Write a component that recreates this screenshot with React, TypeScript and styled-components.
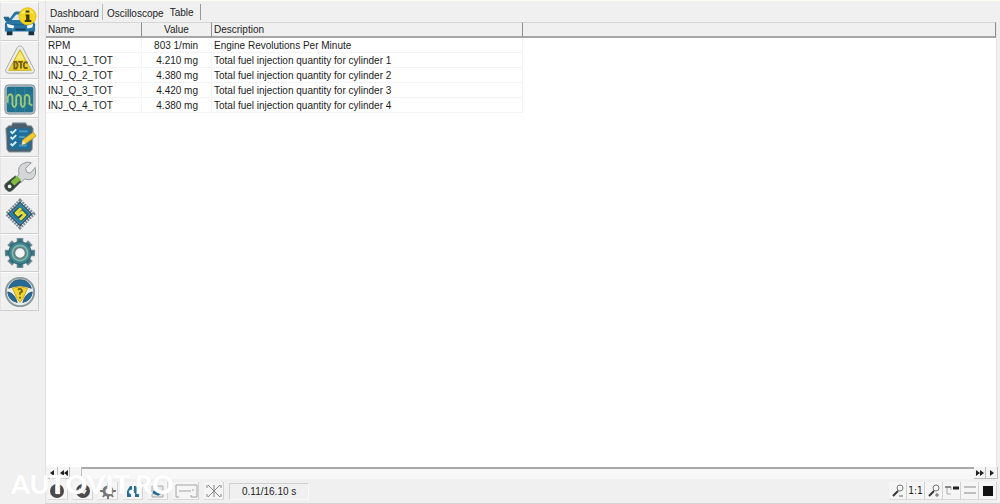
import React, { useState } from "react";
import styled, { createGlobalStyle } from "styled-components";

const GlobalStyle = createGlobalStyle`
  * { box-sizing: border-box; }
  body {
    margin: 0;
    background: #f0f0f0;
    color: #1c1c1c;
    font-family: "Liberation Sans", Arial, sans-serif;
    font-size: 10px;
    line-height: 14px;
  }
  button { font: inherit; color: inherit; }
`;

const Window = styled.div`
  position: relative;
  display: flex;
  min-height: 100vh;
  border-top: 1px solid #fbfbf0;
  overflow: hidden;
`;

const SideBar = styled.nav`
  flex: none;
  width: 46px;
  padding-top: 1px;
  border-right: 1px solid #e2e2e2;
`;

const SideButtons = styled.div`
  display: flex;
  flex-direction: column;
  height: 309px;
`;

const SideButton = styled.button<{ $active?: boolean }>`
  display: flex;
  flex: 1;
  align-items: center;
  justify-content: center;
  width: 39px;
  min-height: 0;
  padding: 0;
  border: 1px solid;
  border-color: #fdfdfd #cfcfcf #cfcfcf #e4e4e4;
  background: ${(p) => (p.$active ? "#f9f9f9" : "#f0f0f0")};
`;

const Main = styled.main`
  display: flex;
  flex: 1;
  flex-direction: column;
  min-width: 0;
`;

const TabBar = styled.div`
  display: flex;
  align-items: stretch;
  height: 21px;
  padding-top: 3px;
`;

const Tab = styled.button<{ $active?: boolean }>`
  display: flex;
  align-items: flex-start;
  padding: ${(p) => (p.$active ? "2px 6px 0 2px" : "3px 3px 0 4px")};
  border: 0;
  border-right: 1px solid ${(p) => (p.$active ? "#9a9a9a" : "#bcbcbc")};
  background: none;
  height: 16px;
  white-space: nowrap;

  &:nth-child(2) { border-right-color: transparent; }
`;

const Panel = styled.section`
  flex: 1;
  margin-right: 3px;
  background: #fff;
  border-right: 1px solid #e6e6e6;
`;

const DataTable = styled.table`
  width: 100%;
  table-layout: fixed;
  border-collapse: separate;
  border-spacing: 0;
  white-space: nowrap;
`;

const Col = styled.col<{ $width?: number }>`
  width: ${(p) => (p.$width ? `${p.$width}px` : "auto")};
`;

const HeadCell = styled.th<{ $center?: boolean }>`
  height: 16px;
  padding: 0 2px;
  background: #f0f0f0;
  border-top: 1px solid #d6d6d6;
  border-right: 1px solid #8e8e8e;
  border-bottom: 2px solid #a6a6a6;
  font-weight: 400;
  line-height: 13px;
  text-align: ${(p) => (p.$center ? "center" : "left")};
`;

const Cell = styled.td<{ $right?: boolean }>`
  height: 15px;
  padding: 1px ${(p) => (p.$right ? "13px" : "2px")} 0 2px;
  border-right: 1px solid #f4f4f4;
  border-bottom: 1px solid #f4f4f4;
  line-height: 13px;
  text-align: ${(p) => (p.$right ? "right" : "left")};

  &:last-child { border-color: transparent; }
`;

const ScrollRow = styled.div`
  display: flex;
  justify-content: space-between;
  height: 12px;
  margin-right: 2px;
  background: linear-gradient(#a8a8a8 0 2px, #f8f8f8 2px);
`;

const ScrollGroup = styled.div`
  display: flex;
  background: #f4f4f4;
`;

const ScrollButton = styled.button`
  display: flex;
  align-items: center;
  justify-content: center;
  width: 12px;
  height: 12px;
  padding: 0;
  border: 0;
  border-right: 1px solid #bdbdbd;
  border-bottom: 1px solid #bdbdbd;
  background: none;
`;

const StatusBar = styled.footer`
  display: flex;
  justify-content: space-between;
  height: 25px;
  padding: 2px 3px 2px 2px;
  border-bottom: 1px solid #d4d4d4;
`;

const ToolGroup = styled.div<{ $wide?: boolean }>`
  display: flex;
  align-items: center;
  gap: ${(p) => (p.$wide ? "5px" : "0")};
`;

const ToolButton = styled.button<{ $wide?: boolean }>`
  display: flex;
  align-items: center;
  justify-content: center;
  width: ${(p) => (p.$wide ? "26px" : "20px")};
  height: 18px;
  padding: 0;
  border: 0;
  border-right: 1px solid #d2d2d2;
  border-bottom: 1px solid #dadada;
  background: #f5f5f5;
`;

const ViewButton = styled(ToolButton)`
  width: 18px;
  font-family: "DejaVu Sans Condensed", "DejaVu Sans", sans-serif;
`;

const TimeField = styled.output`
  width: 80px;
  height: 17px;
  padding-left: 12px;
  border: 1px solid;
  border-color: #d0d0d0 #fafafa #fafafa #d0d0d0;
  line-height: 15px;
  white-space: nowrap;
`;

const Watermark = styled.div`
  position: absolute;
  left: 11px;
  bottom: 5px;
  color: #fff;
  font: 900 27px/30px Lato, sans-serif;
  text-shadow: 0 0 1px #e2e2e2;
  pointer-events: none;
`;

const Icon = ({ children }: { children: React.ReactNode }) => (
  <svg width="34" height="34" viewBox="0 0 36 36" aria-hidden="true">
    {children}
  </svg>
);

const CarIcon = () => (
  <Icon>
    <path d="M4 27h6v6H4zM27 27h6v6h-6z" fill="#18303f" />
    <path d="M2 22q0-3 4-5l5-7q1-2 3-2h11q2 0 3 2l3 7q3 2 3 5v7H2z" fill="#2876a4" />
    <path d="M9 17l5-6h10l3 6z" fill="#d8e9ef" />
    <path d="M1 14h5l1 3-4 1zM3 22h31" stroke="#1c5d88" fill="#25638a" />
    <path d="M4 21l8 2-1 3-6-1zM32 21l-7 2 1 3 5-1z" fill="#f2f8f8" />
    <path d="M13 27h11" stroke="#123d5d" strokeWidth="2" />
    <circle cx="26" cy="13" r="9" fill="#f4d51e" stroke="#e3bf1a" />
    <path d="M20 10q6-6 12 0" stroke="#fbe96c" strokeWidth="2" fill="none" />
    <path d="M24 8h4M24 12h3v5M23 18h7" stroke="#3b3510" strokeWidth="2" fill="none" />
    <path d="M26 12v6" stroke="#3b3510" strokeWidth="3" />
  </Icon>
);

const WarningIcon = () => (
  <Icon>
    <path d="M18 3q2 0 3 2l12 23q1 4-3 4H6q-4 0-3-4L15 5q1-2 3-2z" fill="#eceee9" stroke="#a5aaa7" />
    <path d="M18 7l12 22H6z" fill="#efd12b" stroke="#cdb02a" />
    <path d="M18 9l5 9H13z" fill="#f8ea79" />
    <path d="M12 20v7h2q3-3 0-7zM16 20h5M19 20v7M26 21q-4-2-4 2.500t4 2.500" fill="none" stroke="#75621a" strokeWidth="2" />
  </Icon>
);

const WaveIcon = () => (
  <Icon>
    <rect x="2" y="3" width="32" height="31" rx="4" fill="#b3bfc5" stroke="#85939a" />
    <rect x="4" y="5" width="28" height="27" rx="2" fill="#21718f" />
    <path d="M4 14h28M4 23h28M13 5v27M23 5v27" stroke="#3685a0" />
    <path d="M5 22v-6q3-6 5 0v8q2 5 4 0v-8q2-5 5 0v8q2 5 4 0v-8q2-5 5 0v7l3 2" fill="none" stroke="#9cca78" strokeWidth="2" />
  </Icon>
);

const ChecklistIcon = () => (
  <Icon>
    <path d="M10 3h14l2 3h4l2 3-1 22-2 3H6l-2-3L3 9l3-3h3z" fill="#4a6070" stroke="#9aa6ad" />
    <path d="M6 9h23v22H7z" fill="#1f6f9c" />
    <path d="M8 12l2 2 4-4M8 18l2 2 4-4M8 25l2 2 4-4" stroke="#d8eef6" strokeWidth="2" fill="none" />
    <path d="M17 12h9M17 18h6M17 27h8" stroke="#4c9cc4" strokeWidth="2" />
    <path d="M20 26l1-5 11-8 3 4-11 8z" fill="#efcb35" stroke="#c39a28" />
    <path d="M20 26l1-4 3 3z" fill="#f6ecd0" />
  </Icon>
);

const WrenchIcon = () => (
  <Icon>
    <path d="M17 16q-2-8 4-11 4-3 9-1l-6 6 1 4 4 1 5-6q2 8-3 12-4 2-8 0l-4 4-5-5z" fill="#d4d7d8" stroke="#8f9597" />
    <path d="M13 18l6 6-9 9q-4 3-7-1-3-4 1-7z" fill="#35433d" stroke="#57615b" />
    <path d="M15 18l4 4-7 6-4-4z" fill="#80bd3e" />
    <circle cx="7" cy="29" r="2" fill="#edf0ee" />
  </Icon>
);

const ChipIcon = () => (
  <Icon>
    <path d="M18 4l14 14-14 14L4 18z" fill="none" stroke="#7b8a97" strokeWidth="4" strokeDasharray="2 1" />
    <path d="M18 5l13 13-13 13L5 18z" fill="#24435a" />
    <path d="M18 7l11 11-11 11L7 18z" fill="#247ba0" stroke="#5f9db8" />
    <path d="M19 12l-5 5 2 2 4-3 3 3-5 5" fill="none" stroke="#244c45" strokeWidth="5" />
    <path d="M19 12l-5 5 2 2 4-3 3 3-5 5" fill="none" stroke="#e3dd45" strokeWidth="3" />
  </Icon>
);

const GearIcon = () => (
  <Icon>
    <g stroke="#7c8f97" strokeWidth="7">
      <path d="M18 2v32M2 18h32M7 7l22 22M29 7L7 29" />
    </g>
    <g stroke="#377683" strokeWidth="5">
      <path d="M18 3v30M3 18h30M8 8l20 20M28 8L8 28" />
    </g>
    <circle cx="18" cy="18" r="12" fill="#3c8490" stroke="#315f70" />
    <circle cx="18" cy="18" r="8" fill="none" stroke="#83b7a7" strokeWidth="2" />
    <circle cx="18" cy="18" r="6" fill="#f5f5f5" stroke="#68828a" strokeWidth="2" />
  </Icon>
);

const WheelIcon = () => (
  <Icon>
    <circle cx="18" cy="18" r="15" fill="#e6edef" stroke="#8b999f" strokeWidth="2" />
    <path d="M6 14Q9 5 18 5t12 9q-12-5-24 0zM5 18q7 1 10 11-9-2-10-11zM31 18q-7 1-10 11 9-2 10-11z" fill="#246b96" stroke="#24536f" />
    <path d="M10 14q8-3 16 0l-5 11-3 4-3-4z" fill="#f1d629" stroke="#c9aa22" />
    <path d="M16 16q1-2 3-1 3 2-1 4v2M18 23v2" stroke="#756618" strokeWidth="2" fill="none" />
  </Icon>
);

const SmallIcon = ({ children }: { children: React.ReactNode }) => (
  <svg width="16" height="16" viewBox="0 0 16 16" fill="none" aria-hidden="true">
    {children}
  </svg>
);

const Magnifier = ({ plus }: { plus?: boolean }) => (
  <SmallIcon>
    <circle cx="10" cy="5" r="3" stroke="#777" />
    <path d="M8 8l-5 5" stroke="#333" strokeWidth="2" />
    <path d={plus ? "M9 12h4M11 10v4" : "M9 13h4"} stroke="#666" />
  </SmallIcon>
);

const sections = [
  { label: "Vehicle information", icon: <CarIcon /> },
  { label: "Trouble codes", icon: <WarningIcon /> },
  { label: "Measurements", icon: <WaveIcon /> },
  { label: "Checklist", icon: <ChecklistIcon /> },
  { label: "Service", icon: <WrenchIcon /> },
  { label: "Control unit", icon: <ChipIcon /> },
  { label: "Settings", icon: <GearIcon /> },
  { label: "Driving help", icon: <WheelIcon /> },
];

const rows = [
  ["RPM", "803 1/min", "Engine Revolutions Per Minute"],
  ["INJ_Q_1_TOT", "4.210 mg", "Total fuel injection quantity for cylinder 1"],
  ["INJ_Q_2_TOT", "4.380 mg", "Total fuel injection quantity for cylinder 2"],
  ["INJ_Q_3_TOT", "4.420 mg", "Total fuel injection quantity for cylinder 3"],
  ["INJ_Q_4_TOT", "4.380 mg", "Total fuel injection quantity for cylinder 4"],
];

export default function App() {
  const [tab, setTab] = useState("Table");

  return (
    <>
      <GlobalStyle />
      <Window>
        <SideBar aria-label="Sections">
          <SideButtons>
            {sections.map((s, i) => (
              <SideButton key={s.label} aria-label={s.label} $active={i === 2}>
                {s.icon}
              </SideButton>
            ))}
          </SideButtons>
        </SideBar>
        <Main>
          <TabBar role="tablist">
            {["Dashboard", "Oscilloscope", "Table"].map((name) => (
              <Tab key={name} role="tab" aria-selected={tab === name} $active={tab === name} onClick={() => setTab(name)}>
                {name}
              </Tab>
            ))}
          </TabBar>
          <Panel>
            <DataTable>
              <colgroup>
                <Col $width={96} />
                <Col $width={70} />
                <Col $width={311} />
                <Col />
              </colgroup>
              <thead>
                <tr>
                  <HeadCell>Name</HeadCell>
                  <HeadCell $center>Value</HeadCell>
                  <HeadCell>Description</HeadCell>
                  <HeadCell />
                </tr>
              </thead>
              <tbody>
                {rows.map(([name, value, description]) => (
                  <tr key={name}>
                    <Cell>{name}</Cell>
                    <Cell $right>{value}</Cell>
                    <Cell>{description}</Cell>
                    <Cell />
                  </tr>
                ))}
              </tbody>
            </DataTable>
          </Panel>
          <ScrollRow>
            <ScrollGroup>
              <ScrollButton aria-label="Step back">
                <svg width="8" height="8"><path d="M6 1v6L2 4z" fill="#222" /></svg>
              </ScrollButton>
              <ScrollButton aria-label="Fast back">
                <svg width="10" height="8"><path d="M5 1v6L1 4zM9 1v6L5 4z" fill="#222" /></svg>
              </ScrollButton>
              <ScrollButton aria-label="Position" />
            </ScrollGroup>
            <ScrollGroup>
              <ScrollButton aria-label="Fast forward">
                <svg width="10" height="8"><path d="M1 1v6l4-3zM5 1v6l4-3z" fill="#222" /></svg>
              </ScrollButton>
              <ScrollButton aria-label="Step forward">
                <svg width="8" height="8"><path d="M2 1v6l4-3z" fill="#222" /></svg>
              </ScrollButton>
            </ScrollGroup>
          </ScrollRow>
          <StatusBar>
            <ToolGroup $wide>
              <ToolButton aria-label="Record">
                <SmallIcon><circle cx="7" cy="8" r="7" fill="#4a4a4a" /><path d="M7 3v7" stroke="#eee" strokeWidth="3" /></SmallIcon>
              </ToolButton>
              <ToolButton aria-label="Restart">
                <SmallIcon><circle cx="8" cy="8" r="7" fill="#4a4a4a" /><path d="M4 6l5 4 2-3" stroke="#eee" strokeWidth="2" /></SmallIcon>
              </ToolButton>
              <ToolButton aria-label="Options">
                <SmallIcon><circle cx="8" cy="8" r="4" stroke="#777" strokeWidth="3" /><path d="M8 0v3M8 13v3M0 8h3M13 8h3M3 14l2-3M13 14l-2-3" stroke="#777" strokeWidth="2" /></SmallIcon>
              </ToolButton>
              <ToolButton aria-label="Find">
                <SmallIcon><path d="M2 14V8l3-5h2v4h2V3h2l3 5v6h-4v-4H6v4z" fill="#286d93" /></SmallIcon>
              </ToolButton>
              <ToolButton aria-label="Save">
                <SmallIcon><path d="M2 3h11v11H2z" fill="#e6e6e6" stroke="#aaa" /><path d="M3 9l5 2 5-3" stroke="#286d93" strokeWidth="3" /></SmallIcon>
              </ToolButton>
              <ToolButton $wide aria-label="Ruler">
                <svg width="24" height="16" fill="none" stroke="#a3a3a3"><path d="M2 14V2h21v12h-6M5 8h12M18 7h2" /><path d="M2 14h3M17 12v2" /></svg>
              </ToolButton>
              <ToolButton aria-label="Clear">
                <SmallIcon><path d="M2 2l12 12M14 2L2 14M8 2v12M1 2v3M15 2v3M1 11v3M15 11v3" stroke="#858585" /></SmallIcon>
              </ToolButton>
              <TimeField>0.11/16.10 s</TimeField>
            </ToolGroup>
            <ToolGroup>
              <ViewButton aria-label="Zoom out"><Magnifier /></ViewButton>
              <ViewButton>1:1</ViewButton>
              <ViewButton aria-label="Zoom in"><Magnifier plus /></ViewButton>
              <ViewButton aria-label="Legend">
                <SmallIcon><path d="M3 4v7h4M7 4v3" stroke="#aaa" /><path d="M1 4h6" stroke="#888" strokeWidth="2" /><path d="M9 5h6" stroke="#222" strokeWidth="3" /></SmallIcon>
              </ViewButton>
              <ViewButton aria-label="Lines">
                <SmallIcon><path d="M2 4h12M2 10h12" stroke="#888" /></SmallIcon>
              </ViewButton>
              <ViewButton aria-label="Background colour">
                <SmallIcon><path d="M3 3h10v10H3z" fill="#111" /></SmallIcon>
              </ViewButton>
            </ToolGroup>
          </StatusBar>
        </Main>
        <Watermark>AUTOVIT.RO</Watermark>
      </Window>
    </>
  );
}
